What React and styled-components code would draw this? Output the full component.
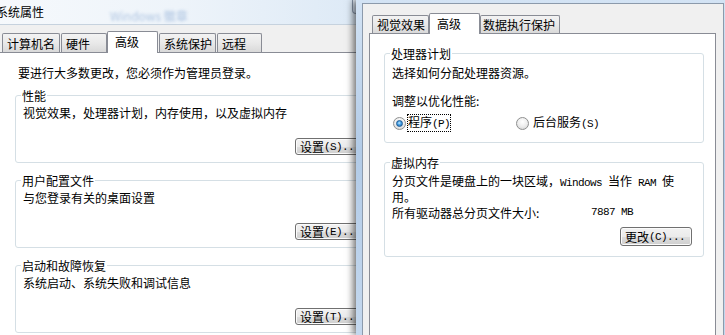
import React from 'react';
import styled, { createGlobalStyle } from 'styled-components';

const GlobalStyle = createGlobalStyle`
  html, body {
    margin: 0;
    padding: 0;
    overflow: hidden;
    background: #f0f0f0;
  }
  body {
    font-family: "Noto Sans CJK SC", "Noto Sans", sans-serif;
    font-size: 12px;
    color: #000;
  }
`;

const Desktop = styled.div`
  display: flex;
  width: 725px;
  height: 335px;
  overflow: hidden;
`;

// left dialog (系统属性), partly hidden behind the right one
const LeftWindow = styled.div`
  width: 356px;
  flex-shrink: 0;
  overflow: hidden;
  display: flex;
`;

const LeftFrame = styled.div`
  width: 410px;
  margin-left: -8px;
  flex-shrink: 0;
  display: flex;
  flex-direction: column;
`;

const TitleBar = styled.div`
  height: 24px;
  display: flex;
  align-items: center;
  padding-left: 4px;
  background: linear-gradient(90deg, #f6f9fc 0%, #eef4fa 45%, #d9e7f5 100%);
  border-bottom: 1px solid #c6d2de;
  white-space: nowrap;
`;

const TitleText = styled.span`
  line-height: 14px;
`;

const GlassText = styled.span`
  margin-left: 66px;
  margin-top: 6px;
  color: #6d94c8;
  opacity: 0.5;
  filter: blur(1.4px);
`;

const CaptionStub = styled.div`
  margin-left: auto;
  align-self: flex-start;
  width: 50px;
  height: 14px;
  box-sizing: border-box;
  border: 1px solid #8796aa;
  border-top: none;
  border-radius: 0 0 4px 4px;
  background: linear-gradient(#e8f0f9, #cddcee);
`;

const LeftBody = styled.div`
  flex: 1;
  display: flex;
  flex-direction: column;
  background: #f0f0f0;
  padding: 6px 0 0 6px;
`;

// right dialog (性能选项)
const RightWindow = styled.div`
  position: relative;
  z-index: 1;
  flex: 1;
  display: flex;
  padding: 3px 1px 0 6px;
  background: linear-gradient(180deg, #d3e3f4 0%, #b2cbe7 45%, #c4d8ee 100%);
  box-shadow: -3px 0 7px rgba(0, 0, 0, 0.55);
`;

const RightBody = styled.div`
  flex: 1;
  display: flex;
  flex-direction: column;
  background: #f0f0f0;
  border: 1px solid #8c9aab;
  border-bottom: none;
  padding: 9px 7px 0 6px;
`;

const TabStrip = styled.div`
  display: flex;
  align-items: flex-end;
  height: ${p => p.$h}px;
  padding-left: ${p => p.$pl}px;
`;

const Tab = styled.div`
  position: relative;
  box-sizing: border-box;
  width: ${p => p.$w}px;
  margin-left: ${p => p.$ml || 0}px;
  height: ${p => (p.$active ? p.$h + 3 : p.$h)}px;
  margin-bottom: ${p => (p.$active ? -1 : 0)}px;
  z-index: ${p => (p.$active ? 2 : 0)};
  padding: ${p => (p.$active ? '0 0 1px 7px' : `1px 0 0 ${p.$pl ?? 4}px`)};
  display: flex;
  align-items: center;
  border: 1px solid #898c95;
  border-bottom: none;
  border-radius: 2px 2px 0 0;
  background: ${p => (p.$active ? '#fff' : 'linear-gradient(#f3f3f3, #e9e9e9 50%, #d9d9d9)')};
  line-height: 14px;
  white-space: nowrap;
`;

const Panel = styled.div`
  position: relative;
  z-index: 1;
  box-sizing: border-box;
  width: ${p => p.$w}px;
  flex: 1;
  display: flex;
  flex-direction: column;
  background: #fff;
  border: 1px solid #898c95;
  border-bottom: none;
  padding: ${p => p.$pad};
`;

const Group = styled.div`
  display: flex;
  flex-direction: column;
  border: 1px solid #d5dfe5;
  border-radius: 3px;
  padding: 0 11px ${p => p.$pb}px 7px;
  margin-top: ${p => p.$mt}px;
`;

const GroupTitle = styled.span`
  align-self: flex-start;
  margin: -8px 0 0 -2px;
  padding: 0 1px;
  background: #fff;
  line-height: 15px;
`;

const Line = styled.div`
  line-height: ${p => p.$lh || 15}px;
  margin-top: ${p => p.$mt || 0}px;
  margin-left: ${p => p.$ml || 0}px;
  white-space: nowrap;
`;

// SimSun-like half-width latin: 6px per character
const Lat = styled.span`
  font-family: "Liberation Mono", "DejaVu Sans Mono", monospace;
  font-size: 11px;
  letter-spacing: -0.6px;
`;

const Button = styled.div`
  align-self: flex-end;
  box-sizing: border-box;
  width: 72px;
  height: ${p => p.$h}px;
  margin-top: ${p => p.$mt}px;
  padding-left: 4px;
  display: flex;
  align-items: center;
  border: 1px solid #707070;
  border-radius: 3px;
  box-shadow: inset 0 0 0 1px #fbfbfb;
  background: linear-gradient(#f2f2f2 0%, #ebebeb 50%, #dddddd 51%, #cfcfcf 100%);
  line-height: 14px;
  white-space: nowrap;
`;

const RadioRow = styled.div`
  display: flex;
  align-items: center;
  height: 16px;
  margin-top: ${p => p.$mt}px;
`;

const RadioItem = styled.div`
  display: flex;
  align-items: center;
  width: ${p => (p.$w ? `${p.$w}px` : 'auto')};
  flex-shrink: 0;
`;

const Radio = styled.span`
  position: relative;
  box-sizing: border-box;
  width: 13px;
  height: 13px;
  margin-left: 1px;
  flex-shrink: 0;
  border-radius: 50%;
  border: 1px solid #8e8f8f;
  background: radial-gradient(circle at 50% 35%, #ffffff 0%, #eeeeee 50%, #cfcfcf 100%);

  &::after {
    content: '';
    display: ${p => (p.$checked ? 'block' : 'none')};
    position: absolute;
    inset: 2px;
    border-radius: 50%;
    border: 1px solid #1d5a95;
    background: radial-gradient(circle at 45% 40%, #cdeeff 0%, #4ba4e6 40%, #1665ad 100%);
  }
`;

const RadioLabel = styled.span`
  margin-left: ${p => (p.$focus ? 1 : 3)}px;
  line-height: 13px;
  border: 1px dotted ${p => (p.$focus ? '#000' : 'transparent')};
`;

const SizeRow = styled.div`
  display: flex;
  line-height: 15px;
  margin-top: ${p => p.$mt}px;
  white-space: nowrap;
`;

const SizeLabel = styled.span`
  width: 199px;
  flex-shrink: 0;
`;

const leftTabs = [
  { label: '计算机名', w: 58 },
  { label: '硬件', w: 46, ml: 1 },
  { label: '高级', w: 51, active: true },
  { label: '系统保护', w: 57, ml: 1 },
  { label: '远程', w: 45, ml: 1 },
];

const rightTabs = [
  { label: '视觉效果', w: 57 },
  { label: '高级', w: 51, active: true },
  { label: '数据执行保护', w: 80, pl: 2 },
];

const leftGroups = [
  { title: '性能', desc: '视觉效果，处理器计划，内存使用，以及虚拟内存', key: 'S', mt: 15 },
  { title: '用户配置文件', desc: '与您登录有关的桌面设置', key: 'E', mt: 17 },
  { title: '启动和故障恢复', desc: '系统启动、系统失败和调试信息', key: 'T', mt: 17 },
];

export default function App() {
  return (
    <>
      <GlobalStyle />
      <Desktop>
        <LeftWindow>
          <LeftFrame>
            <TitleBar>
              <TitleText>系统属性</TitleText>
              <GlassText>Windows 徽章</GlassText>
              <CaptionStub />
            </TitleBar>
            <LeftBody>
              <TabStrip $h={21} $pl={4}>
                {leftTabs.map(t => (
                  <Tab key={t.label} $w={t.w} $ml={t.ml} $h={19} $active={t.active}>
                    {t.label}
                  </Tab>
                ))}
              </TabStrip>
              <Panel $w={398} $pad="12px 16px 0 16px">
                <Line $ml={3}>要进行大多数更改，您必须作为管理员登录。</Line>
                {leftGroups.map(g => (
                  <Group key={g.key} $mt={g.mt} $pb={7}>
                    <GroupTitle>{g.title}</GroupTitle>
                    <Line $mt={2}>{g.desc}</Line>
                    <Button $h={17} $mt={18}>
                      设置<Lat>({g.key})...</Lat>
                    </Button>
                  </Group>
                ))}
              </Panel>
            </LeftBody>
          </LeftFrame>
        </LeftWindow>

        <RightWindow>
          <RightBody>
            <TabStrip $h={20} $pl={3}>
              {rightTabs.map(t => (
                <Tab key={t.label} $w={t.w} $h={18} $pl={t.pl} $active={t.active}>
                  {t.label}
                </Tab>
              ))}
            </TabStrip>
            <Panel $w={347} $pad="0 11px 0 14px">
              <Group $mt={19} $pb={11}>
                <GroupTitle>处理器计划</GroupTitle>
                <Line $mt={4}>选择如何分配处理器资源。</Line>
                <Line $mt={13}>调整以优化性能:</Line>
                <RadioRow $mt={7}>
                  <RadioItem $w={123}>
                    <Radio $checked />
                    <RadioLabel $focus>
                      程序<Lat>(P)</Lat>
                    </RadioLabel>
                  </RadioItem>
                  <RadioItem>
                    <Radio />
                    <RadioLabel>
                      后台服务<Lat>(S)</Lat>
                    </RadioLabel>
                  </RadioItem>
                </RadioRow>
              </Group>
              <Group $mt={19} $pb={10}>
                <GroupTitle>虚拟内存</GroupTitle>
                <Line $mt={4} $lh={13}>
                  分页文件是硬盘上的一块区域，<Lat>Windows </Lat>当作<Lat> RAM </Lat>使
                  <br />
                  用。
                </Line>
                <SizeRow $mt={2}>
                  <SizeLabel>所有驱动器总分页文件大小:</SizeLabel>
                  <Lat>7887 MB</Lat>
                </SizeRow>
                <Button $h={19} $mt={7}>
                  更改<Lat>(C)...</Lat>
                </Button>
              </Group>
            </Panel>
          </RightBody>
        </RightWindow>
      </Desktop>
    </>
  );
}
